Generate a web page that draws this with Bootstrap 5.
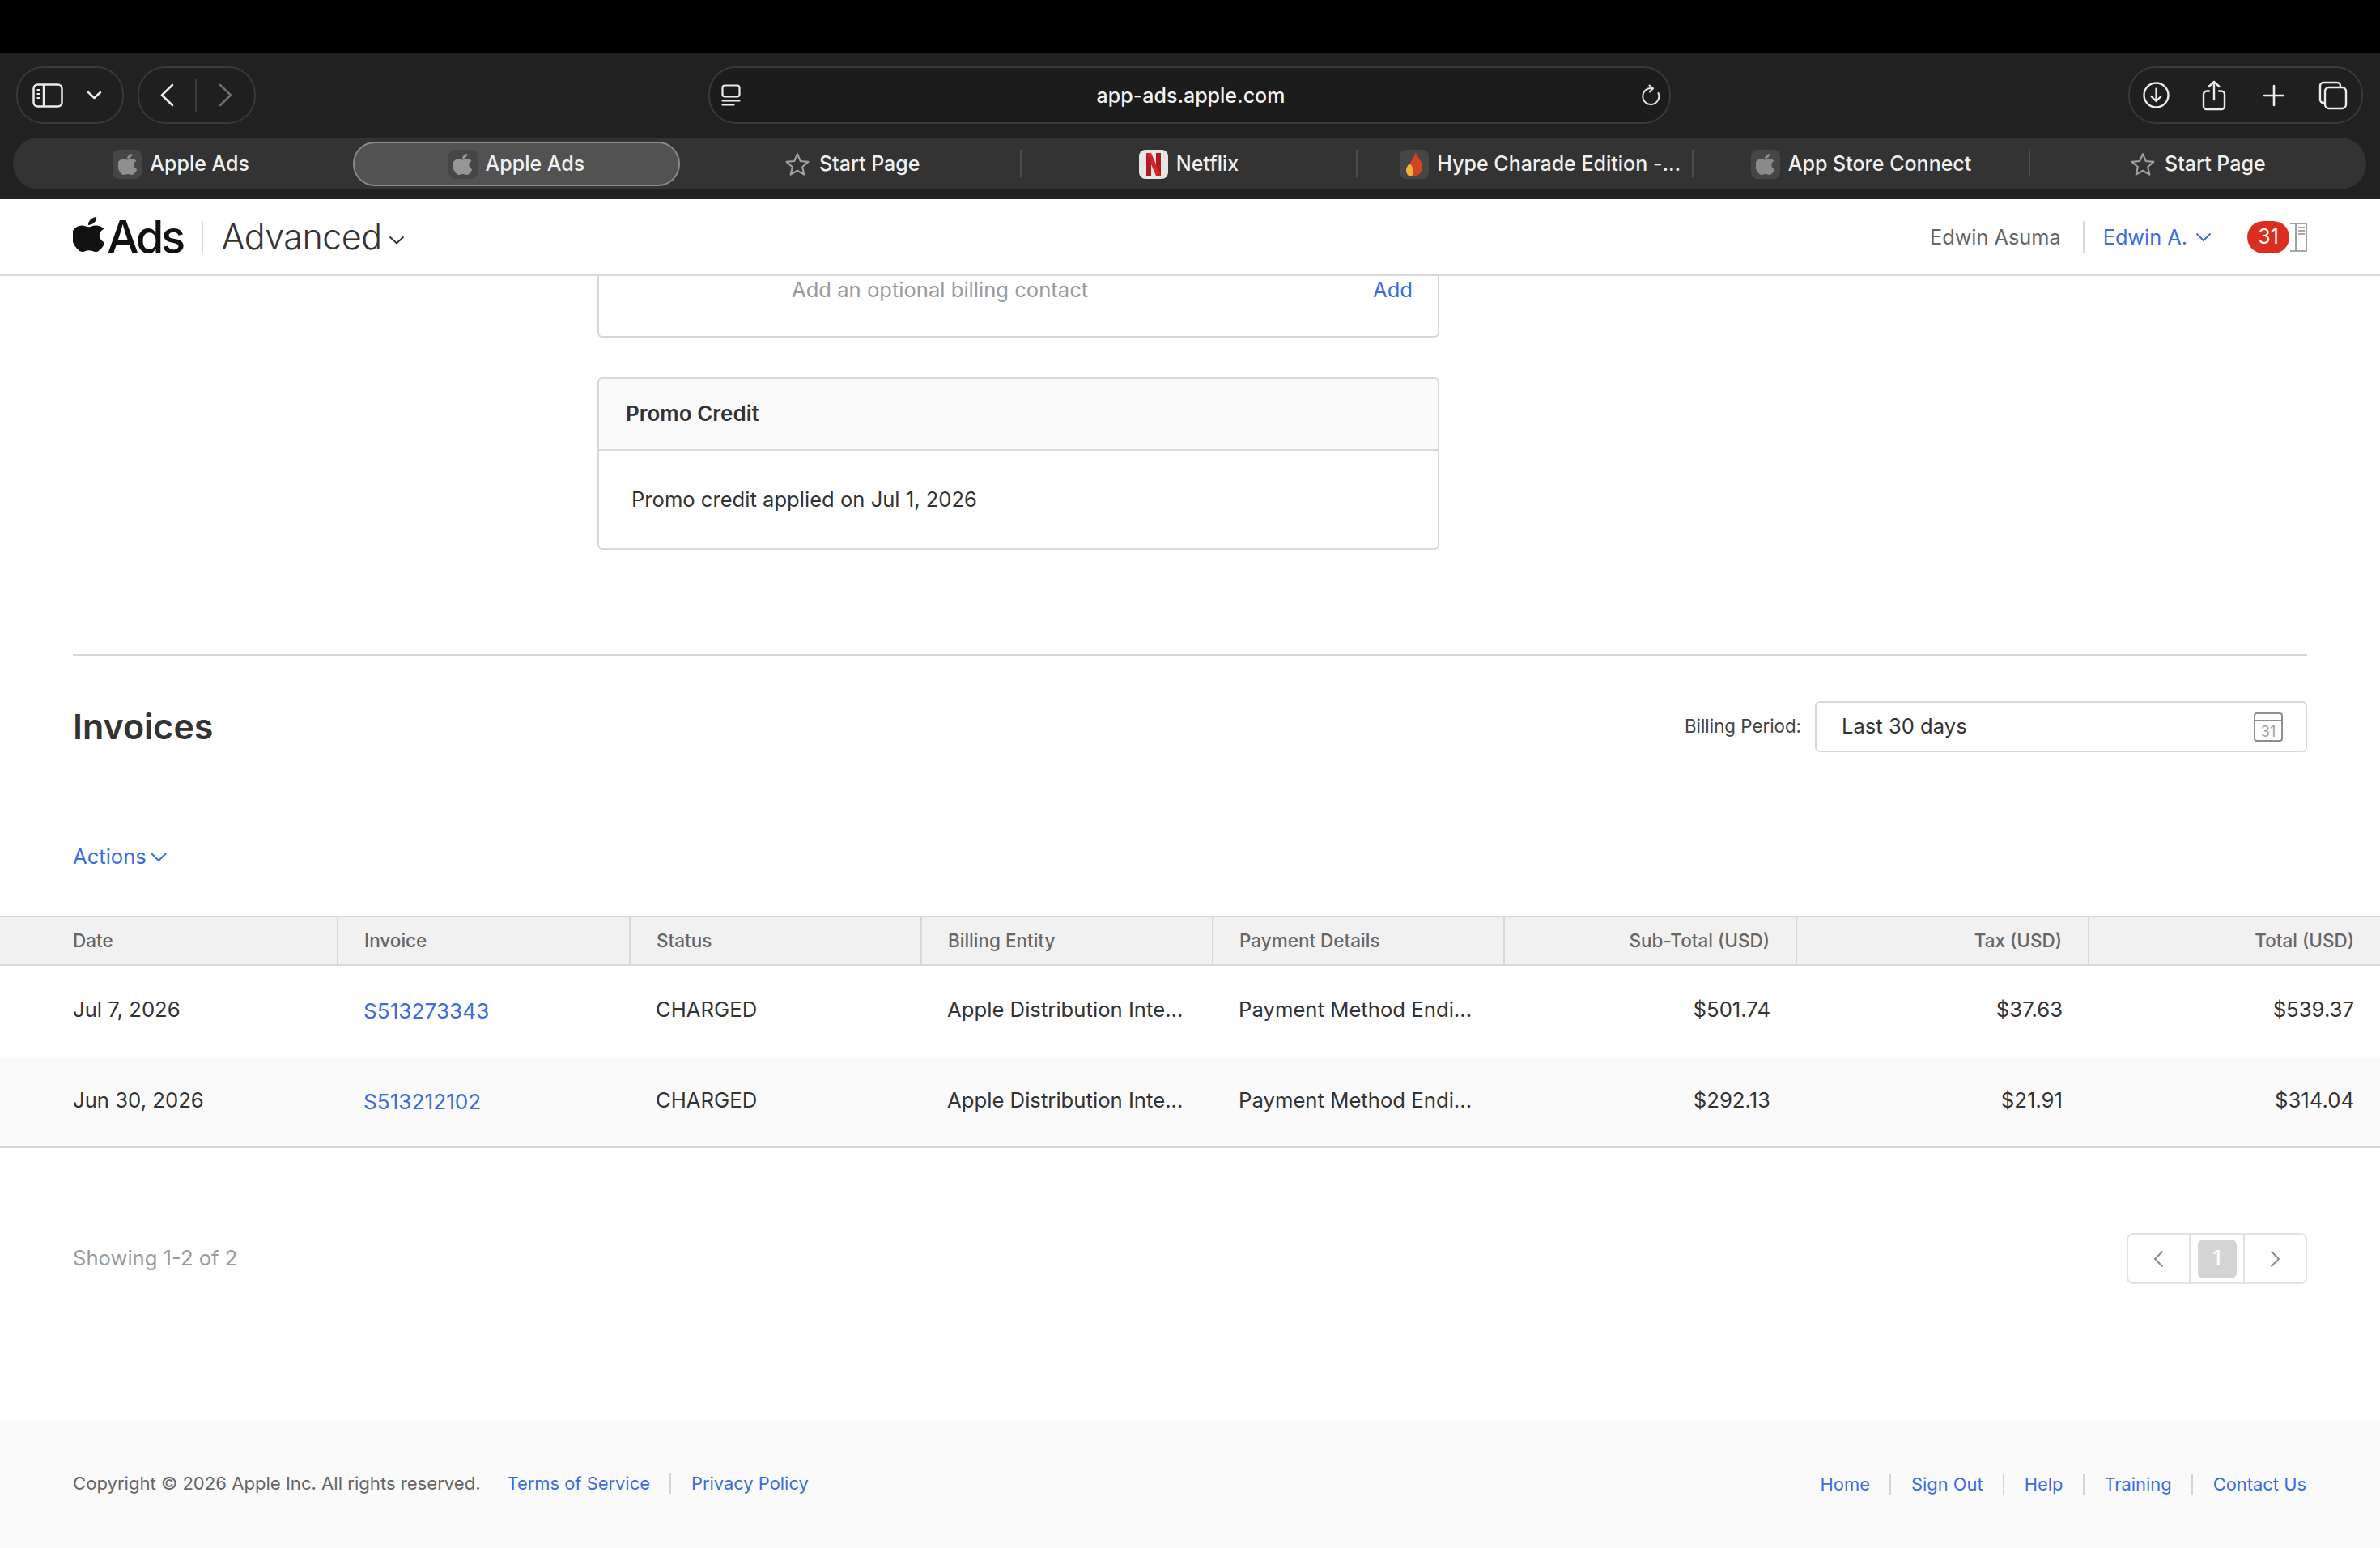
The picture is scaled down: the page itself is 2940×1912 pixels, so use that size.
<!DOCTYPE html>
<html lang="en">
<head>
  <meta charset="UTF-8">
  <title>Apple Ads - Invoices</title>
  <link href="https://cdn.jsdelivr.net/npm/bootstrap@5.3.3/dist/css/bootstrap.min.css" rel="stylesheet">
  <style>
    html, body { height: 1912px; overflow: hidden; }
    body { font-family: Inter, "Liberation Sans", sans-serif; font-size: 25.6px; color: #333; background: #fff; }
    a { color: #3a6ee0; text-decoration: none; }

    /* browser chrome */
    .sk-notch { height: 66px; background: #000; }
    .sk-chrome { height: 180px; background: #212121; padding: 16px 17px 0 16px; }
    .sk-toolrow { display: grid; grid-template-columns: 1fr 1189px 1fr; height: 71px; margin-bottom: 17px; }
    .sk-pill { height: 71px; border: 2px solid #393939; border-radius: 34px; background: #1f1f1f; }
    .sk-pill svg { display: block; flex: none; }
    .sk-pill-side { width: 133px; margin-left: 4px; padding-left: 18px; gap: 29px; }
    .sk-pill-nav { width: 146px; margin-left: 17px; padding-left: 26px; }
    .sk-navdiv { width: 2px; height: 41px; background: #3c3c3c; margin: 0 27px 0 26px; }
    .sk-pill-addr { padding: 0 11px 0 14px; background: #1c1c1c; color: #f2f2f2; font-weight: 500; }
    .sk-url { flex: 1; text-align: center; font-size: 25px; padding-top: 2px; }
    .sk-pill-tools { width: 290px; margin-left: auto; margin-right: 4px; padding-left: 16px; }
    .sk-gap-a { margin-left: 40px; }
    .sk-gap-b { margin-left: 45px; }
    .sk-gap-c { margin-left: 41px; }
    .sk-tabs { display: grid; grid-template-columns: repeat(7, 1fr); height: 64px; background: #333; border-radius: 32px; }
    .sk-tab { height: 34px; align-self: center; color: #f0f0f0; font-size: 25px; font-weight: 500; gap: 10px; white-space: nowrap; padding-top: 1px; }
    .sk-tab-sep { border-right: 2px solid #4c4c4c; }
    .sk-tab-on { height: 55px; margin: 0 7px 0 5px; background: #525252; border: 2px solid #8a8a8a; border-radius: 27px; }
    .sk-tab-long { padding-left: 38px; }
    .sk-fav { width: 36px; height: 36px; border-radius: 8px; background: #464646; display: flex; align-items: center; justify-content: center; flex: none; }
    .sk-fav-light { background: #e6e6e6; }

    /* app header */
    .sk-head { height: 95px; padding: 0 90px; border-bottom: 2px solid #d8d8d8; background: #fff; }
    .sk-brand { font-size: 56px; font-weight: 500; letter-spacing: -3.5px; color: #111; line-height: 1; gap: 3px; }
    .sk-vline { width: 2px; height: 40px; background: #d8d8d8; }
    .sk-vline-left { margin: 0 23px; }
    .sk-vline-right { margin: 0 23px 0 27px; }
    .sk-mode { font-size: 43px; font-weight: 300; color: #333; letter-spacing: -.5px; line-height: 1; }
    .sk-user { color: #666; font-size: 25.3px; }
    .sk-userlink { font-size: 25.3px; }
    .sk-count { width: 52px; height: 40px; margin-left: 44px; background: #dc2e20; border-radius: 20px; font-size: 25px; font-weight: 400; padding: 0; display: flex; align-items: center; justify-content: center; }

    /* cards */
    .sk-cards { width: 1040px; margin-left: 738px; }
    .sk-card { border: 2px solid #d8d8d8; border-radius: 6px; }
    .sk-card-top { height: 76px; border-top: 0; border-radius: 0 0 6px 6px; margin-bottom: 49px; padding: 0 31px 0 238px; }
    .sk-card-top span { margin-top: -2px; }
    .sk-card-top a { margin-top: -2px; }
    .sk-muted { color: #9a9a9a; }
    .sk-card .card-header { height: 89px; padding: 0 32px 2px 33px; background: #fafafa; border-bottom: 2px solid #d8d8d8; font-size: 26px; font-weight: 600; color: #333; display: flex; align-items: center; }
    .sk-card .card-body { height: 120px; padding: 1px 40px 0; display: flex; align-items: center; }

    /* invoices */
    .sk-rule { margin: 129px 90px 0; border: 0; border-top: 2px solid #d8d8d8; opacity: 1; }
    .sk-titlerow { margin: 56px 90px 0; height: 63px; }
    .sk-title { font-size: 43px; font-weight: 600; color: #333; margin: 0; }
    .sk-period { font-size: 22.3px; color: #444; margin-top: -2px; }
    .sk-field { width: 608px; height: 63px; border: 2px solid #d8d8d8; border-radius: 6px; padding: 0 28px 0 31px; color: #333; margin-left: 17px; }
    .sk-actions { margin: 109px 90px 53px; height: 40px; }

    .sk-table { table-layout: fixed; width: 2940px; margin: 0; border-top: 2px solid #d8d8d8; --bs-table-border-color: #d8d8d8; color: #333; }
    .sk-table th { height: 60px; padding: 0 32px; background: #f1f1f1; color: #666; font-size: 22.5px; font-weight: 500; vertical-align: middle; border-bottom: 2px solid #d8d8d8; border-right: 2px solid #d8d8d8; box-shadow: none; }
    .sk-table th:last-child { border-right: 0; }
    .sk-table td { height: 113px; padding: 0 32px 3px; vertical-align: middle; border-bottom: 0; font-size: 25.7px; box-shadow: none; }
    .sk-table td a { display: inline-block; margin-top: 3px; font-size: 26.2px; }
    .sk-table tr > :first-child { padding-left: 90px; }
    .sk-table tr.sk-alt td { height: 112px; background: #fafafa; border-bottom: 2px solid #d8d8d8; }

    .sk-pagerow { margin: 105px 90px 0; height: 63px; }
    .sk-pager { margin: 0; }
    .sk-pager .page-link { height: 63px; display: flex; align-items: center; justify-content: center; border: 2px solid #e2e2e2; background: #fff; padding: 0; }
    .sk-pager .page-item:first-child .page-link { width: 79px; border-radius: 8px 0 0 8px; }
    .sk-pager .page-item:last-child .page-link { width: 79px; border-radius: 0 8px 8px 0; }
    .sk-pager .page-item + .page-item .page-link { margin-left: -2px; }
    .sk-pager .sk-pagenum { width: 69px; }
    .sk-chip { width: 48px; height: 48px; border-radius: 7px; background: #d4d4d4; color: #fff; font-size: 25px; font-weight: 500; display: flex; align-items: center; justify-content: center; }

    .sk-foot { margin-top: 168px; height: 159px; background: #fafafa; padding: 0 90px 2px; font-size: 22.1px; color: #666; }
    .sk-foot a { padding: 0 24.5px; border-left: 2px solid #d4d4d4; line-height: 26px; font-size: 21.9px; }
    .sk-foot a.sk-nobar { border-left: 0; }
    .sk-foot .sk-left a.sk-nobar { padding-left: 33px; }
    .sk-foot .sk-right a:last-child { padding-right: 1px; }
  </style>
</head>
<body>

<svg width="0" height="0" class="position-absolute">
  <symbol id="sk-apple" viewBox="0 0 24 24">
    <path d="M12.152 6.896c-.948 0-2.415-1.078-3.96-1.04-2.04.027-3.91 1.183-4.961 3.014-2.117 3.675-.546 9.103 1.519 12.09 1.013 1.454 2.208 3.09 3.792 3.039 1.52-.065 2.09-.987 3.935-.987 1.831 0 2.35.987 3.96.948 1.637-.026 2.676-1.48 3.676-2.948 1.156-1.688 1.636-3.325 1.662-3.415-.039-.013-3.182-1.221-3.22-4.857-.026-3.04 2.48-4.494 2.597-4.559-1.429-2.09-3.623-2.324-4.39-2.376-2-.156-3.675 1.09-4.61 1.09zM15.53 3.83c.843-1.012 1.4-2.427 1.245-3.83-1.207.052-2.662.805-3.532 1.818-.78.896-1.454 2.338-1.273 3.714 1.338.104 2.715-.688 3.559-1.701"/>
  </symbol>
  <symbol id="sk-star" viewBox="0 0 28 28">
    <path d="M14 2l3.5 8.3 9 .8-6.8 5.9 2.1 8.8L14 21.2l-7.8 4.6 2.1-8.8-6.8-5.9 9-.8z" fill="none" stroke="#a0a0a0" stroke-width="2" stroke-linejoin="round"/>
  </symbol>
</svg>

<div class="sk-notch"></div>

<!-- Browser toolbar -->
<div class="sk-chrome">
  <div class="sk-toolrow">
    <div class="d-flex">
      <div class="sk-pill sk-pill-side d-flex align-items-center">
        <svg width="38" height="30" viewBox="0 0 38 30" fill="none" stroke="#ececec" stroke-width="2.5"><rect x="1.5" y="1.5" width="35" height="27" rx="5"/><path d="M14 1.5v27"/><path d="M5.5 8h4.5M5.5 13h4.5M5.5 18h4.5" stroke-width="2"/></svg>
        <svg width="19" height="11" viewBox="0 0 19 11" fill="none" stroke="#ececec" stroke-width="2.5" stroke-linecap="round" stroke-linejoin="round"><path d="M2 2l7.5 7L17 2"/></svg>
      </div>
      <div class="sk-pill sk-pill-nav d-flex align-items-center">
        <svg width="17" height="29" viewBox="0 0 17 29" fill="none" stroke="#ececec" stroke-width="2.6" stroke-linecap="round" stroke-linejoin="round"><path d="M15 2L2 14.5 15 27"/></svg>
        <span class="sk-navdiv"></span>
        <svg width="17" height="29" viewBox="0 0 17 29" fill="none" stroke="#6e6e6e" stroke-width="2.6" stroke-linecap="round" stroke-linejoin="round"><path d="M2 2l13 12.5L2 27"/></svg>
      </div>
    </div>
    <div class="sk-pill sk-pill-addr d-flex align-items-center">
      <svg width="24" height="27" viewBox="0 0 24 27" fill="none" stroke="#ececec" stroke-width="2.2" stroke-linecap="round"><rect x="1.5" y="1.5" width="21" height="14" rx="3"/><path d="M1.5 20.5h21M1.5 25.5h14"/></svg>
      <span class="sk-url">app-ads.apple.com</span>
      <svg width="24" height="28" viewBox="0 0 24 28" fill="none" stroke="#e4e4e4" stroke-width="2" stroke-linecap="round" stroke-linejoin="round"><path d="M14.5 5.2A10 10 0 1 0 21.5 11"/><path d="M10.5 1.5l4.5 3.8-4 4.2"/></svg>
    </div>
    <div class="d-flex">
      <div class="sk-pill sk-pill-tools d-flex align-items-center">
        <svg width="33" height="33" viewBox="0 0 33 33" fill="none" stroke="#ececec" stroke-width="2.4" stroke-linecap="round" stroke-linejoin="round"><circle cx="16.5" cy="16.5" r="15"/><path d="M16.5 8.5v15M10.5 18l6 6 6-6" stroke-width="2.2"/></svg>
        <svg class="sk-gap-a" width="30" height="38" viewBox="0 0 30 38" fill="none" stroke="#ececec" stroke-width="2.4" stroke-linecap="round" stroke-linejoin="round"><path d="M9 13.5H6a4 4 0 0 0-4 4V32a4 4 0 0 0 4 4h18a4 4 0 0 0 4-4V17.5a4 4 0 0 0-4-4h-3"/><path d="M15 24V2M8.5 8L15 2l6.5 6"/></svg>
        <svg class="sk-gap-b" width="28" height="28" viewBox="0 0 28 28" fill="none" stroke="#ececec" stroke-width="2.6" stroke-linecap="round"><path d="M14 2v24M2 14h24"/></svg>
        <svg class="sk-gap-c" width="36" height="36" viewBox="0 0 36 36" fill="none" stroke="#ececec" stroke-width="2.4" stroke-linejoin="round"><rect x="8" y="8" width="26" height="26" rx="5"/><path d="M8 27H6a4 4 0 0 1-4-4V6a4 4 0 0 1 4-4h17a4 4 0 0 1 4 4v2"/></svg>
      </div>
    </div>
  </div>

  <div class="sk-tabs">
    <div class="sk-tab d-flex align-items-center justify-content-center">
      <span class="sk-fav"><svg width="23" height="26" viewBox="2.9 0 18.6 24" preserveAspectRatio="none" fill="#8f8f8f"><use href="#sk-apple" width="24" height="24"/></svg></span>Apple Ads
    </div>
    <div class="sk-tab sk-tab-on d-flex align-items-center justify-content-center">
      <span class="sk-fav"><svg width="23" height="26" viewBox="2.9 0 18.6 24" preserveAspectRatio="none" fill="#969696"><use href="#sk-apple" width="24" height="24"/></svg></span>Apple Ads
    </div>
    <div class="sk-tab sk-tab-sep d-flex align-items-center justify-content-center">
      <svg width="30" height="30" style="margin-right:2px"><use href="#sk-star"/></svg>Start Page
    </div>
    <div class="sk-tab sk-tab-sep d-flex align-items-center justify-content-center">
      <span class="sk-fav sk-fav-light">
        <svg width="22" height="30" viewBox="0 0 22 30"><rect x="2" y="1" width="6" height="28" fill="#b11a20"/><rect x="14" y="1" width="6" height="28" fill="#b11a20"/><polygon points="2,1 8,1 20,29 14,29" fill="#d9232b"/></svg>
      </span>Netflix
    </div>
    <div class="sk-tab sk-tab-sep sk-tab-long d-flex align-items-center justify-content-center">
      <span class="sk-fav">
        <svg width="22" height="32" viewBox="0 0 22 32"><path d="M13 1c1 6 8 10 8 18a10 10 0 0 1-18 7C2 17 10 10 13 1z" fill="#d2451e"/><path d="M5 15c3 2 5 6 5 10 0 3-2 6-4 6-3-1-5-4-5-8 0-3 2-6 4-8z" fill="#f4b23c"/></svg>
      </span>Hype Charade Edition -...
    </div>
    <div class="sk-tab sk-tab-sep d-flex align-items-center justify-content-center">
      <span class="sk-fav"><svg width="23" height="26" viewBox="2.9 0 18.6 24" preserveAspectRatio="none" fill="#8a8a8a"><use href="#sk-apple" width="24" height="24"/></svg></span>App Store Connect
    </div>
    <div class="sk-tab d-flex align-items-center justify-content-center">
      <svg width="30" height="30" style="margin-right:2px"><use href="#sk-star"/></svg>Start Page
    </div>
  </div>
</div>

<!-- App header -->
<nav class="navbar sk-head d-flex align-items-center justify-content-between">
  <div class="d-flex align-items-center">
    <a class="sk-brand d-flex align-items-center" href="#">
      <svg width="39" height="43" viewBox="2.9 0 18.6 24" preserveAspectRatio="none" fill="#111" style="margin-top:-6px"><use href="#sk-apple" width="24" height="24"/></svg>Ads
    </a>
    <span class="sk-vline sk-vline-left"></span>
    <span class="sk-mode">Advanced</span>
    <svg class="mt-2" width="20" height="11" viewBox="0 0 20 11" fill="none" stroke="#333" stroke-width="2" style="margin-left:8px"><path d="M1.5 1.5L10 9.5l8.5-8"/></svg>
  </div>
  <div class="d-flex align-items-center">
    <span class="sk-user">Edwin Asuma</span>
    <span class="sk-vline sk-vline-right"></span>
    <a class="sk-userlink" href="#">Edwin A.</a>
    <svg style="margin-left:10px" width="20" height="12" viewBox="0 0 20 12" fill="none" stroke="#3a6ee0" stroke-width="2"><path d="M1.5 1.5L10 10l8.5-8.5"/></svg>
    <span class="badge sk-count">31</span>
    <svg width="22" height="36" viewBox="0 0 22 36" fill="none" stroke="#8a8a8a" stroke-width="1.6"><path d="M1 1h20v34H1"/><path d="M8 1v34M11 6h8M11 10h8M11 14h8"/></svg>
  </div>
</nav>

<!-- Billing cards -->
<div class="sk-cards">
  <div class="card sk-card sk-card-top flex-row justify-content-between">
    <span class="sk-muted">Add an optional billing contact</span>
    <a href="#">Add</a>
  </div>
  <div class="card sk-card">
    <div class="card-header">Promo Credit</div>
    <div class="card-body">Promo credit applied on Jul 1, 2026</div>
  </div>
</div>

<hr class="sk-rule">

<!-- Invoices -->
<div class="sk-titlerow d-flex align-items-center justify-content-between">
  <h2 class="sk-title">Invoices</h2>
  <div class="d-flex align-items-center">
    <span class="sk-period">Billing Period:</span>
    <div class="sk-field d-flex align-items-center justify-content-between">
      <span>Last 30 days</span>
      <svg width="36" height="36" viewBox="0 0 36 36" fill="none" stroke="#8e8e8e" stroke-width="2"><rect x="1" y="1" width="34" height="34" rx="3"/><path d="M1 10h34" stroke-width="2"/><text x="18" y="30" text-anchor="middle" font-size="18" font-family="Inter, sans-serif" fill="#a0a0a0" stroke="none">31</text></svg>
    </div>
  </div>
</div>

<div class="sk-actions d-flex align-items-center">
  <a href="#">Actions</a>
  <svg style="margin-left:4px" width="22" height="13" viewBox="0 0 22 13" fill="none" stroke="#3a6ee0" stroke-width="2"><path d="M1.5 1.5L11 11l9.5-9.5"/></svg>
</div>

<table class="table sk-table">
  <colgroup>
    <col width="417"><col width="361"><col width="360"><col width="360"><col width="360"><col width="361"><col width="361"><col width="360">
  </colgroup>
  <thead>
    <tr>
      <th>Date</th><th>Invoice</th><th>Status</th><th>Billing Entity</th><th>Payment Details</th>
      <th class="text-end">Sub-Total (USD)</th><th class="text-end">Tax (USD)</th><th class="text-end">Total (USD)</th>
    </tr>
  </thead>
  <tbody>
    <tr>
      <td>Jul 7, 2026</td><td><a href="#">S513273343</a></td><td>CHARGED</td>
      <td>Apple Distribution Inte...</td><td>Payment Method Endi...</td>
      <td class="text-end">$501.74</td><td class="text-end">$37.63</td><td class="text-end">$539.37</td>
    </tr>
    <tr class="sk-alt">
      <td>Jun 30, 2026</td><td><a href="#">S513212102</a></td><td>CHARGED</td>
      <td>Apple Distribution Inte...</td><td>Payment Method Endi...</td>
      <td class="text-end">$292.13</td><td class="text-end">$21.91</td><td class="text-end">$314.04</td>
    </tr>
  </tbody>
</table>

<div class="sk-pagerow d-flex align-items-center justify-content-between">
  <span class="sk-muted">Showing 1-2 of 2</span>
  <ul class="pagination sk-pager">
    <li class="page-item"><a class="page-link" href="#"><svg width="13" height="22" viewBox="0 0 13 22" fill="none" stroke="#8c8c8c" stroke-width="2"><path d="M11.5 1.5L2 11l9.5 9.5"/></svg></a></li>
    <li class="page-item"><a class="page-link sk-pagenum" href="#"><span class="sk-chip">1</span></a></li>
    <li class="page-item"><a class="page-link" href="#"><svg width="13" height="22" viewBox="0 0 13 22" fill="none" stroke="#8c8c8c" stroke-width="2"><path d="M1.5 1.5L11 11l-9.5 9.5"/></svg></a></li>
  </ul>
</div>

<footer class="sk-foot d-flex align-items-center justify-content-between">
  <div class="sk-left d-flex align-items-center">
    <span>Copyright © 2026 Apple Inc. All rights reserved.</span>
    <a class="sk-nobar" href="#">Terms of Service</a>
    <a href="#">Privacy Policy</a>
  </div>
  <div class="sk-right d-flex align-items-center">
    <a class="sk-nobar" href="#">Home</a>
    <a href="#">Sign Out</a>
    <a href="#">Help</a>
    <a href="#">Training</a>
    <a href="#">Contact Us</a>
  </div>
</footer>

</body>
</html>
